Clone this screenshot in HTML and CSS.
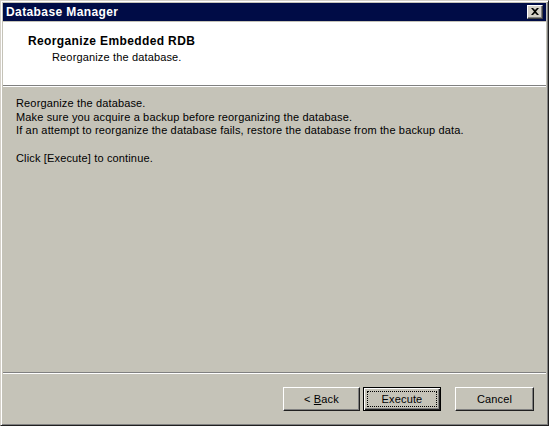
FILE: index.html
```html
<!DOCTYPE html>
<html>
<head>
<meta charset="utf-8">
<link rel="stylesheet" href="styles.css">
</head>
<body>
<div class="window">
  <div class="titlebar">
    <span class="title">Database Manager</span>
    <span class="close"><svg width="8" height="7" viewBox="0 0 8 7"><path d="M0 0h2l2 2 2-2h2L5 3.5 8 7H6L4 5 2 7H0l3-3.5z" fill="#000"/></svg></span>
  </div>
  <div class="header">
    <div class="h-title">Reorganize Embedded RDB</div>
    <div class="h-sub">Reorganize the database.</div>
  </div>
  <div class="sep"></div>
  <div class="content">
    <p>Reorganize the database.<br>Make sure you acquire a backup before reorganizing the database.<br>If an attempt to reorganize the database fails, restore the database from the backup data.</p>
    <p>Click [Execute] to continue.</p>
  </div>
  <div class="sep"></div>
  <div class="footer">
    <button class="btn"><span>&lt; <u>B</u>ack</span></button>
    <button class="btn default"><span class="focus">Execute</span></button>
    <button class="btn cancel"><span>Cancel</span></button>
  </div>
</div>
</body>
</html>
```
FILE: styles.css
```css
html, body {
  margin: 0;
  padding: 0;
  background: #c5c3b8;
}
body {
  font-family: "Liberation Sans", Arial, sans-serif;
  font-size: 11px;
  letter-spacing: 0.15px;
  color: #000;
}
.window {
  width: 549px;
  height: 426px;
  box-sizing: border-box;
  border: 1px solid;
  border-color: #d4d0c8 #202020 #202020 #d4d0c8;
  display: flex;
  flex-direction: column;
  background: #c5c3b8;
  box-shadow: inset 1px 1px 0 #fff, inset -1px -1px 0 #808080;
  padding: 2px;
}
.titlebar {
  height: 18px;
  background: #000c46;
  display: flex;
  align-items: center;
  justify-content: space-between;
  padding: 0 3px 0 3px;
  flex: none;
}
.title {
  color: #fff;
  font-weight: bold;
  font-size: 12px;
  letter-spacing: 0.4px;
}
.close {
  width: 16px;
  height: 14px;
  box-sizing: border-box;
  background: #d4d0c8;
  border: 1px solid;
  border-color: #fff #404040 #404040 #fff;
  box-shadow: inset -1px -1px 0 #808080;
  display: flex;
  align-items: center;
  justify-content: center;
  padding-bottom: 1px;
}
.header {
  margin-top: 1px;
  height: 63px;
  background: #fff;
  flex: none;
  box-sizing: border-box;
  padding: 12px 0 0 25px;
}
.h-title {
  font-weight: bold;
  font-size: 12px;
  letter-spacing: 0.37px;
  line-height: 14px;
}
.h-sub {
  padding-left: 24px;
  margin-top: 2px;
  line-height: 14px;
}
.sep {
  height: 1px;
  background: #808080;
  border-bottom: 1px solid #fff;
  flex: none;
}
.content {
  flex: 1;
  padding: 10px 0 0 13px;
}
.content p {
  margin: 0 0 14px 0;
  line-height: 13.7px;
}
.footer {
  height: 49px;
  flex: none;
  display: flex;
  align-items: flex-start;
  padding: 13px 0 0 280px;
  box-sizing: border-box;
}
.btn {
  width: 77px;
  height: 24px;
  box-sizing: border-box;
  background: #c5c3b8;
  font-family: "Liberation Sans", Arial, sans-serif;
  font-size: 11px;
  letter-spacing: 0.15px;
  color: #000;
  border: 1px solid;
  border-color: #fff #202020 #202020 #fff;
  box-shadow: inset -1px -1px 0 #808080;
  padding: 0;
  margin: 0 3px 0 0;
  display: flex;
  align-items: center;
  justify-content: center;
}
.btn.default {
  width: 78px;
  border: 1px solid #000;
  box-shadow: inset 1px 1px 0 #fff, inset -1px -1px 0 #202020, inset -2px -2px 0 #808080;
}
.focus {
  display: flex;
  align-items: center;
  justify-content: center;
  width: 68px;
  height: 14px;
  outline: 1px dotted #000;
}
.btn.cancel {
  width: 79px;
  margin-left: 11px;
}
```
